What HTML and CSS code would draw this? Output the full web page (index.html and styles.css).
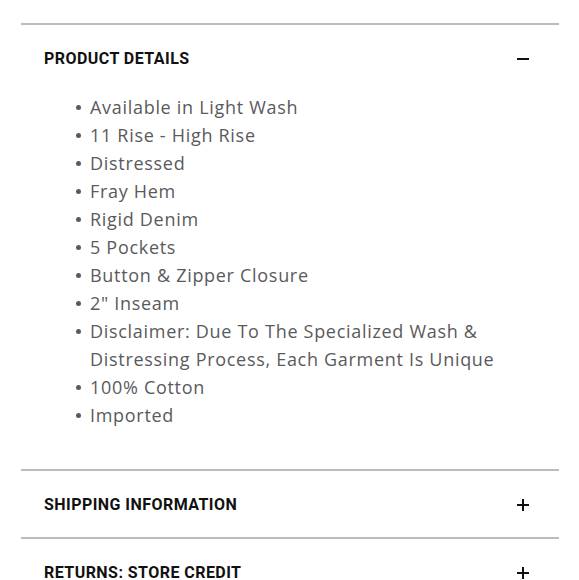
FILE: index.html
```html
<!DOCTYPE html>
<html>
<head>
<meta charset="utf-8">
<link rel="stylesheet" href="styles.css">
</head>
<body>
<div class="accordion">
  <section class="panel">
    <div class="panel-head">
      <h2 class="panel-title">PRODUCT DETAILS</h2>
      <svg class="toggle" width="12" height="12" viewBox="0 0 12 12"><rect x="0" y="5" width="12" height="2" fill="#111"/></svg>
    </div>
    <ul class="details">
      <li>Available in Light Wash</li>
      <li>11 Rise - High Rise</li>
      <li>Distressed</li>
      <li>Fray Hem</li>
      <li>Rigid Denim</li>
      <li>5 Pockets</li>
      <li>Button &amp; Zipper Closure</li>
      <li>2" Inseam</li>
      <li>Disclaimer: Due To The Specialized Wash &amp; Distressing Process, Each Garment Is Unique</li>
      <li>100% Cotton</li>
      <li>Imported</li>
    </ul>
  </section>
  <section class="panel">
    <div class="panel-head">
      <h2 class="panel-title">SHIPPING INFORMATION</h2>
      <svg class="toggle" width="12" height="12" viewBox="0 0 12 12"><rect x="0" y="5" width="12" height="2" fill="#111"/><rect x="5" y="0" width="2" height="12" fill="#111"/></svg>
    </div>
  </section>
  <section class="panel">
    <div class="panel-head">
      <h2 class="panel-title">RETURNS: STORE CREDIT</h2>
      <svg class="toggle" width="12" height="12" viewBox="0 0 12 12"><rect x="0" y="5" width="12" height="2" fill="#111"/><rect x="5" y="0" width="2" height="12" fill="#111"/></svg>
    </div>
  </section>
</div>
</body>
</html>
```

FILE: styles.css
```css
html, body {
  margin: 0;
  padding: 0;
  background: #fff;
}
body {
  font-family: "Open Sans", "Liberation Sans", sans-serif;
}
.accordion {
  padding: 23px 20px 0 21px;
}
.panel {
  border-top: 2px solid #bcbcbc;
}
.panel-head {
  display: flex;
  align-items: center;
  justify-content: space-between;
  padding: 24px 30px 22px 23px;
  height: 20px;
}
.panel-title {
  margin: 0;
  font-family: "Roboto", "Liberation Sans", sans-serif;
  font-size: 16px;
  line-height: 20px;
  font-weight: 700;
  letter-spacing: 0.45px;
  color: #111;
}
.toggle {
  display: block;
}
.details {
  list-style: none;
  margin: 2px 0 40px 0;
  padding: 0 30px 0 52px;
  font-size: 18px;
  line-height: 28px;
  letter-spacing: 0.7px;
  color: #5a5a5c;
}
.details li {
  display: grid;
  grid-template-columns: 17px 1fr;
  align-items: start;
}
.details li::before {
  content: "";
  width: 5px;
  height: 5px;
  border-radius: 50%;
  background: #5a5a5c;
  margin-top: 12px;
  margin-left: 3px;
}
```
